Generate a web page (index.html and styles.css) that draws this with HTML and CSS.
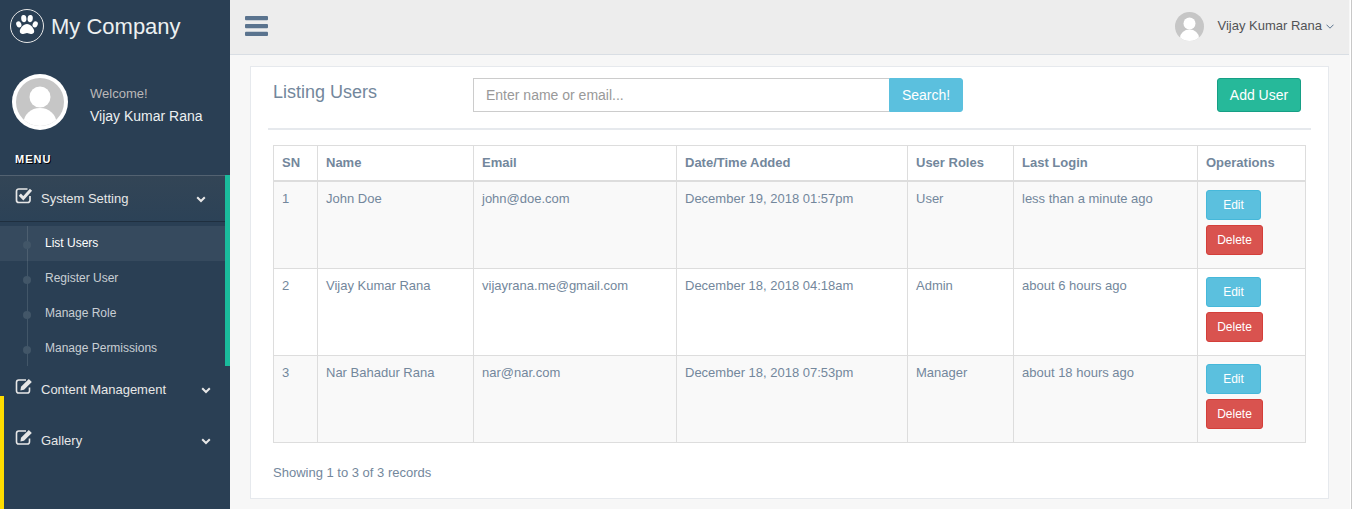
FILE: index.html
```html
<!DOCTYPE html>
<html lang="en">
<head>
<meta charset="utf-8">
<title>Listing Users</title>
<link rel="stylesheet" href="styles.css">
</head>
<body>
<div class="app">
  <aside class="sidebar">
    <div class="brand">
      <span class="brand-logo">
        <svg width="36" height="36" viewBox="0 0 36 36"><circle cx="18" cy="18" r="16.5" fill="none" stroke="#e7e7e7" stroke-width="1"/><g fill="#fff"><ellipse cx="9.8" cy="16.4" rx="2.5" ry="3.2" transform="rotate(-22 9.8 16.4)"/><ellipse cx="14.8" cy="10.6" rx="2.6" ry="3.6" transform="rotate(-6 14.8 10.6)"/><ellipse cx="21.2" cy="10.6" rx="2.6" ry="3.6" transform="rotate(6 21.2 10.6)"/><ellipse cx="26.2" cy="16.4" rx="2.5" ry="3.2" transform="rotate(22 26.2 16.4)"/><path d="M18 16c-3.500 0-7.200 4.300-7.200 7.300 0 2.100 1.600 2.900 3.300 2.700 1.500-.2 2.600-1 3.900-1s2.400.8 3.900 1c1.700.2 3.300-.6 3.300-2.700C25.200 20.300 21.500 16 18 16z"/></g></svg>
      </span>
      <span class="brand-name">My Company</span>
    </div>
    <div class="profile">
      <svg class="profile-pic" width="56" height="56" viewBox="0 0 56 56"><defs><clipPath id="pc"><circle cx="28" cy="28" r="24"/></clipPath></defs><circle cx="28" cy="28" r="28" fill="#fff"/><circle cx="28" cy="28" r="24" fill="#c6c6c6"/><g clip-path="url(#pc)" fill="#fff"><circle cx="28" cy="23" r="10.500"/><ellipse cx="28" cy="49" rx="16.500" ry="15"/></g></svg>
      <div class="profile-info">
        <span class="welcome">Welcome!</span>
        <span class="profile-name">Vijay Kumar Rana</span>
      </div>
    </div>
    <h3 class="menu-title">Menu</h3>
    <ul class="side-menu">
      <li class="menu-item current">
        <a class="menu-link active-link">
          <svg class="menu-icon" width="18" height="18" viewBox="0 0 18 18"><path d="M12.500 3H3.800A2.300 2.300 0 0 0 1.500 5.300v8.900a2.300 2.300 0 0 0 2.300 2.300h8.900a2.300 2.300 0 0 0 2.300-2.300V10" fill="none" stroke="#e7e7e7" stroke-width="1.700"/><path d="M4.800 8.600 8.300 12.200 16 3.800" fill="none" stroke="#e7e7e7" stroke-width="3"/></svg>
          <span class="menu-text">System Setting</span>
          <svg class="chevron" width="10" height="7" viewBox="0 0 10 7"><path d="M1.200 1.200 5 5 8.800 1.200" fill="none" stroke="#e7e7e7" stroke-width="2"/></svg>
        </a>
        <ul class="child-menu">
          <li class="child-item selected"><a>List Users</a></li>
          <li class="child-item"><a>Register User</a></li>
          <li class="child-item"><a>Manage Role</a></li>
          <li class="child-item"><a>Manage Permissions</a></li>
        </ul>
      </li>
      <li class="menu-item">
        <a class="menu-link">
          <svg class="menu-icon" width="18" height="18" viewBox="0 0 18 18"><path d="M11 3H3.800A2.300 2.300 0 0 0 1.500 5.300v8.400a2.300 2.300 0 0 0 2.300 2.300h8.400a2.300 2.300 0 0 0 2.300-2.300V10.500" fill="none" stroke="#e7e7e7" stroke-width="1.600"/><path d="M6 9.800 13.800 2l3 3L9 12.800l-3.600.7z" fill="#e7e7e7"/></svg>
          <span class="menu-text">Content Management</span>
          <svg class="chevron" width="10" height="7" viewBox="0 0 10 7"><path d="M1.200 1.200 5 5 8.800 1.200" fill="none" stroke="#e7e7e7" stroke-width="2"/></svg>
        </a>
      </li>
      <li class="menu-item">
        <a class="menu-link">
          <svg class="menu-icon" width="18" height="18" viewBox="0 0 18 18"><path d="M11 3H3.800A2.300 2.300 0 0 0 1.500 5.300v8.400a2.300 2.300 0 0 0 2.300 2.300h8.400a2.300 2.300 0 0 0 2.300-2.300V10.500" fill="none" stroke="#e7e7e7" stroke-width="1.600"/><path d="M6 9.800 13.800 2l3 3L9 12.800l-3.600.7z" fill="#e7e7e7"/></svg>
          <span class="menu-text">Gallery</span>
          <svg class="chevron" width="10" height="7" viewBox="0 0 10 7"><path d="M1.200 1.200 5 5 8.800 1.200" fill="none" stroke="#e7e7e7" stroke-width="2"/></svg>
        </a>
      </li>
    </ul>
    <div class="yellow-mark"></div>
  </aside>
  <div class="main">
    <header class="topnav">
      <svg class="toggle" width="23" height="20" viewBox="0 0 23 20"><g fill="#5a738e"><rect y="0" width="23" height="4.200" rx="1"/><rect y="8" width="23" height="4.200" rx="1"/><rect y="15.800" width="23" height="4.200" rx="1"/></g></svg>
      <div class="user-menu">
        <svg class="user-pic" width="29" height="29" viewBox="0 0 29 29"><defs><clipPath id="uc"><circle cx="14.500" cy="14.500" r="14.500"/></clipPath></defs><circle cx="14.500" cy="14.500" r="14.500" fill="#c6c6c6"/><g clip-path="url(#uc)" fill="#fff"><circle cx="14.500" cy="11.500" r="6"/><ellipse cx="14.500" cy="26" rx="9.500" ry="8.500"/></g></svg>
        <span class="user-name">Vijay Kumar Rana</span>
        <svg class="user-caret" width="8" height="5" viewBox="0 0 8 5"><path d="M.5.700 4 4.200 7.500.700" fill="none" stroke="#5a738e" stroke-width="1"/></svg>
      </div>
    </header>
    <main class="content">
      <section class="panel">
        <div class="panel-head">
          <h2 class="panel-title">Listing Users</h2>
          <form class="search">
            <input class="search-input" type="text" placeholder="Enter name or email...">
            <button class="search-btn" type="button">Search!</button>
          </form>
          <button class="add-btn" type="button">Add User</button>
        </div>
        <hr class="divider">
        <table class="users">
          <colgroup>
            <col class="c-sn"><col class="c-name"><col class="c-email"><col class="c-date"><col class="c-roles"><col class="c-login"><col class="c-ops">
          </colgroup>
          <thead>
            <tr><th>SN</th><th>Name</th><th>Email</th><th>Date/Time Added</th><th>User Roles</th><th>Last Login</th><th>Operations</th></tr>
          </thead>
          <tbody>
            <tr>
              <td>1</td><td>John Doe</td><td>john@doe.com</td><td>December 19, 2018 01:57pm</td><td>User</td><td>less than a minute ago</td>
              <td class="ops"><button class="btn btn-edit" type="button">Edit</button><button class="btn btn-delete" type="button">Delete</button></td>
            </tr>
            <tr>
              <td>2</td><td>Vijay Kumar Rana</td><td>vijayrana.me@gmail.com</td><td>December 18, 2018 04:18am</td><td>Admin</td><td>about 6 hours ago</td>
              <td class="ops"><button class="btn btn-edit" type="button">Edit</button><button class="btn btn-delete" type="button">Delete</button></td>
            </tr>
            <tr>
              <td>3</td><td>Nar Bahadur Rana</td><td>nar@nar.com</td><td>December 18, 2018 07:53pm</td><td>Manager</td><td>about 18 hours ago</td>
              <td class="ops"><button class="btn btn-edit" type="button">Edit</button><button class="btn btn-delete" type="button">Delete</button></td>
            </tr>
          </tbody>
        </table>
        <p class="records">Showing 1 to 3 of 3 records</p>
      </section>
    </main>
  </div>
  <div class="edge"></div>
</div>
</body>
</html>
```
FILE: styles.css
```css
* { box-sizing: border-box; }
html, body { margin: 0; height: 100%; }
body {
  font-family: "Liberation Sans", Arial, sans-serif;
  font-size: 13px;
  line-height: 1.47;
  color: #73879c;
  background: #fff;
  overflow: hidden;
}
ul { list-style: none; margin: 0; padding: 0; }

.app { display: flex; height: 509px; overflow: hidden; }

/* Sidebar */
.sidebar {
  position: relative;
  flex: 0 0 230px;
  background: #2a3f54;
  color: #e7e7e7;
}
.brand { display: flex; align-items: center; height: 52px; padding-left: 9px; }
.brand-logo { display: flex; width: 42px; }
.brand-name { font-size: 22px; line-height: 1; margin-top: 2px; color: #ecf0f1; }

.profile { display: flex; align-items: center; padding: 22px 0 0 12px; }
.profile-pic { display: block; flex: none; }
.profile-info { display: flex; flex-direction: column; margin-left: 22px; padding-top: 5px; }
.welcome { font-size: 13px; line-height: 19px; color: #bab8b8; }
.profile-name { font-size: 14px; line-height: 20px; margin-top: 3px; color: #ecf0f1; }

.menu-title {
  margin: 21px 0 0;
  padding-left: 15px;
  height: 24px;
  font-size: 11px;
  line-height: 16px;
  font-weight: bold;
  letter-spacing: 1px;
  text-transform: uppercase;
  color: #fff;
  text-shadow: 1px 1px #000;
}

.menu-item { margin-bottom: 5px; }
.menu-item.current { margin-bottom: 0; border-right: 5px solid #1abb9c; }
.menu-link {
  display: flex;
  align-items: center;
  height: 46px;
  padding: 2px 19px 0 15px;
  color: #e7e7e7;
}
.active-link {
  background: linear-gradient(#334556, #2c4257);
  box-shadow: rgba(0, 0, 0, .25) 0 1px 0, inset rgba(255, 255, 255, .16) 0 1px 0;
}
.menu-icon { flex: none; margin-top: -8px; }
.menu-text { margin-left: 8px; flex: 1; }
.chevron { flex: none; }

.child-menu { position: relative; margin-top: 5px; }
.child-menu::before {
  content: "";
  position: absolute;
  left: 27px;
  top: 0;
  bottom: 0;
  width: 1px;
  background: #425668;
}
.child-item {
  position: relative;
  height: 35px;
  padding-left: 45px;
  font-size: 12px;
  line-height: 35px;
  color: rgba(255, 255, 255, .75);
}
.child-item::before {
  content: "";
  position: absolute;
  left: 23px;
  top: 15px;
  width: 8px;
  height: 8px;
  border-radius: 50%;
  background: #425668;
}
.child-item.selected { background: rgba(255, 255, 255, .06); color: #fff; }

.yellow-mark {
  position: absolute;
  left: 0;
  top: 396px;
  bottom: 0;
  width: 4px;
  background: #ffdd00;
}

/* Top navigation */
.main { flex: 1; min-width: 0; display: flex; flex-direction: column; background: #f7f7f7; }
.topnav {
  flex: none;
  display: flex;
  align-items: center;
  justify-content: space-between;
  height: 55px;
  padding: 0 15px 2px 15px;
  background: #ededed;
  border-bottom: 1px solid #d9dee4;
}
.toggle { display: block; }
.user-menu { display: flex; align-items: center; }
.user-pic { display: block; }
.user-name { margin-left: 13px; font-size: 13px; color: #515356; }
.user-caret { margin-left: 4px; margin-top: 1px; }

/* Panel */
.content { flex: 1; padding: 11px 20px 10px 20px; }
.panel {
  height: 433px;
  padding: 11px 17px 0;
  background: #fff;
  border: 1px solid #e6e9ed;
}
.panel-head { display: flex; align-items: flex-start; padding: 0 10px 0 5px; }
.panel-title {
  flex: 0 0 200px;
  margin: 1px 0 0;
  font-size: 18px;
  font-weight: normal;
  line-height: 26px;
  color: #73879c;
}
.search { display: flex; width: 490px; margin: 0; }
.search-input {
  flex: 1;
  min-width: 0;
  height: 34px;
  padding: 6px 12px;
  font: 14px "Liberation Sans", Arial, sans-serif;
  color: #555;
  border: 1px solid #ccc;
  border-right: 0;
  border-radius: 0;
  outline: 0;
}
.search-input::placeholder { color: #999; opacity: 1; }
.search-btn {
  flex: 0 0 74px;
  height: 34px;
  padding: 0;
  font: 14px "Liberation Sans", Arial, sans-serif;
  color: #fff;
  background: #5bc0de;
  border: 1px solid #5bc0de;
  border-radius: 0 3px 3px 0;
}
.add-btn {
  flex: 0 0 84px;
  height: 34px;
  margin-left: auto;
  padding: 0;
  font: 14px "Liberation Sans", Arial, sans-serif;
  color: #fff;
  background: #26b99a;
  border: 1px solid #169f85;
  border-radius: 3px;
}
.divider { height: 2px; margin: 16px 0 15px; border: 0; background: #e6e9ed; }

/* Table */
.users {
  width: 1032px;
  margin-left: 5px;
  border-collapse: collapse;
  table-layout: fixed;
  color: #73879c;
}
.c-sn { width: 44px; }
.c-name { width: 156px; }
.c-email { width: 203px; }
.c-date { width: 231px; }
.c-roles { width: 106px; }
.c-login { width: 184px; }
.c-ops { width: 108px; }
.users th, .users td {
  padding: 7px 8px 8px;
  border: 1px solid #ddd;
  text-align: left;
  vertical-align: top;
  line-height: 19px;
}
.users th { height: 35px; border-bottom-width: 2px; }
.users tbody tr { height: 87px; }
.users tbody tr:nth-child(odd) { background: #f9f9f9; }
.users td.ops { padding-top: 8px; }

.btn {
  display: block;
  height: 30px;
  padding: 0;
  font: 12px "Liberation Sans", Arial, sans-serif;
  color: #fff;
  border-radius: 3px;
  border: 1px solid;
}
.btn-edit { width: 55px; background: #5bc0de; border-color: #46b8da; }
.btn-delete { width: 57px; margin-top: 5px; background: #d9534f; border-color: #d43f3a; }

.records { margin: 20px 0 0 5px; line-height: 19px; }

.edge { flex: 0 0 3px; border-left: 1px solid #f7f7f7; border-right: 1px solid #c8c8c8; background: #fff; }
```
